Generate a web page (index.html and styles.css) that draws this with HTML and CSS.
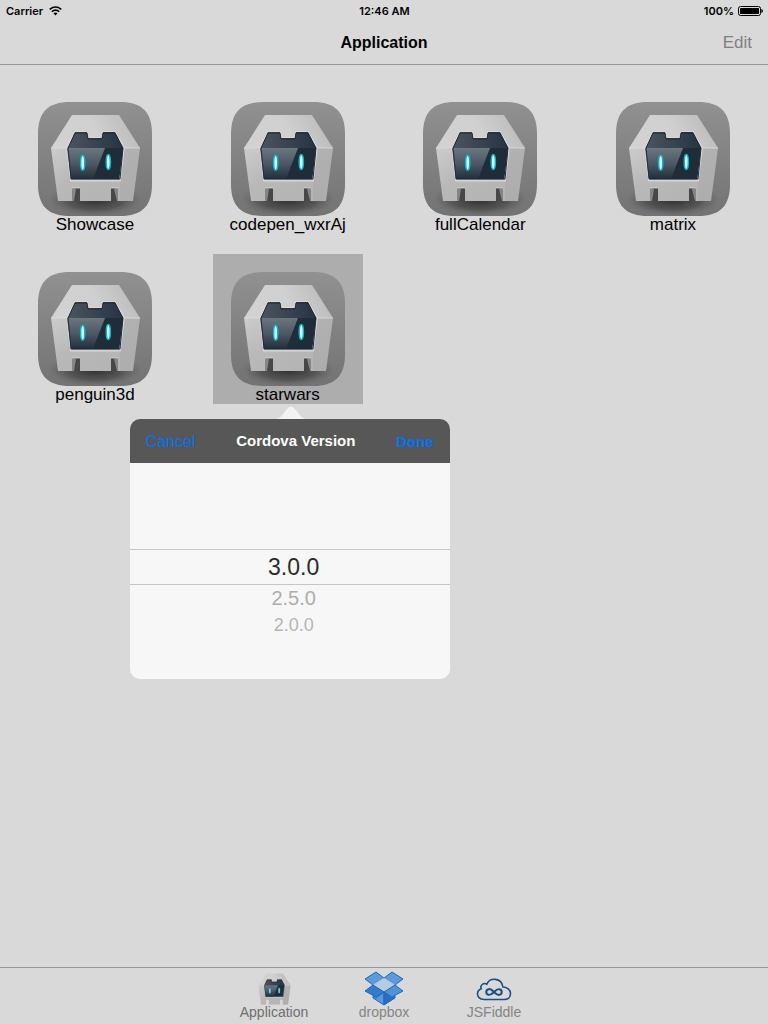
FILE: index.html
```html
<!DOCTYPE html>
<html lang="en">
<head>
<meta charset="utf-8">
<meta name="viewport" content="width=device-width, initial-scale=1">
<title>Application</title>
<link rel="stylesheet" href="styles.css">
</head>
<body>
<svg class="defs" aria-hidden="true">
  <defs>
    <linearGradient id="tile" x1="0" y1="0" x2="0" y2="1"><stop offset="0" stop-color="#919191"/><stop offset="1" stop-color="#737373"/></linearGradient>
    <linearGradient id="roof" x1="0" y1="0.6" x2="1" y2="0.4"><stop offset="0" stop-color="#d2d2d2"/><stop offset="0.5" stop-color="#d0d0d0"/><stop offset="1" stop-color="#bababa"/></linearGradient>
    <linearGradient id="front" x1="0" y1="0" x2="1" y2="1"><stop offset="0" stop-color="#cccccc"/><stop offset="0.4" stop-color="#b9b9b9"/><stop offset="1" stop-color="#b2b2b2"/></linearGradient>
    <linearGradient id="glare" x1="0" y1="0" x2="0" y2="1"><stop offset="0" stop-color="#6d767f"/><stop offset="0.5" stop-color="#4c5864"/><stop offset="1" stop-color="#222e3a"/></linearGradient>
    <linearGradient id="visor" x1="0" y1="0" x2="1" y2="0"><stop offset="0" stop-color="#4b545e"/><stop offset="1" stop-color="#263442"/></linearGradient>
    <linearGradient id="leg" x1="0" y1="0" x2="1" y2="0"><stop offset="0" stop-color="#8a8a8a"/><stop offset="0.5" stop-color="#5a5a5a"/><stop offset="1" stop-color="#444"/></linearGradient>
    <radialGradient id="shadow"><stop offset="0" stop-color="#222" stop-opacity="0.85"/><stop offset="0.6" stop-color="#333" stop-opacity="0.5"/><stop offset="1" stop-color="#555" stop-opacity="0"/></radialGradient>
    <symbol id="robot" viewBox="12 12 91 88">
      <path fill="url(#roof)" d="M34 13H81L102 46H86L77 30H65L64 36H50L49 30H37L29 46H13Z"/>
      <path fill="url(#front)" d="M13 46H29L33 78H82L86 46H102L95 99H80V86H73V99H42V86H34V99H20Z"/>
      <path fill="#8d8d8d" d="M86 46H102L95 99H82V78Z" opacity="0.15"/>
      <path fill="#202d39" stroke="#dadada" stroke-width="1.6" d="M37 30H49L50 36H64L65 30H77L86 46L82 78H33L29 46Z"/>
      <path fill="url(#visor)" d="M37 30H49L50 36H64L65 30H77L85 46H30Z"/>
      <path fill="url(#glare)" d="M29 46H67L55 77H33Z"/>
      <path fill="none" stroke="#202b36" stroke-width="1" d="M30 46L37 31H49L50 37H64L65 31H77L85 46L82 77H33L30 46"/>
      <path fill="none" stroke="#dcdcdc" stroke-width="0.8" d="M32 79H83M34 86H42M73 86H80M13 46H29M86 46H102"/>
      <g stroke="#08b6cc" stroke-width="1.5" fill="#d5f3f3"><ellipse cx="44.7" cy="60.7" rx="2.1" ry="7.5"/><ellipse cx="70.3" cy="60" rx="2.1" ry="7.5"/></g>
    </symbol>
    <symbol id="app" viewBox="0 0 114 114">
      <clipPath id="tileclip"><path d="M32 0H82C104 0 114 10 114 32V82C114 104 104 114 82 114H32C10 114 0 104 0 82V32C0 10 10 0 32 0Z"/></clipPath>
      <g clip-path="url(#tileclip)">
        <rect width="114" height="114" fill="url(#tile)"/>
        <ellipse cx="57" cy="98" rx="47" ry="16" fill="url(#shadow)"/>
        <path fill="#474747" d="M34 86H42V99H34ZM73 86H80V99H73Z"/>
        <path fill="#858585" d="M38 87L36 99H34V86ZM76 87L79 99H80V86Z"/>
        <use href="#robot" x="12" y="12" width="91" height="88"/>
      </g>
    </symbol>
  </defs>
</svg>
<div class="screen">
  <div class="status">
    <span class="status-left">Carrier
      <svg width="13" height="10" viewBox="0 0 13 10" fill="none" stroke="#000" stroke-width="1.6" aria-label="Wi-Fi"><path d="M0.7 3.3Q6.5 -1.3 12.3 3.3M2.8 5.6Q6.5 2.6 10.2 5.6"/><path d="M4.5 7.3Q6.5 5.8 8.5 7.3L6.5 9.5Z" fill="#000" stroke="none"/></svg>
    </span>
    <span>12:46 AM</span>
    <span class="status-right">100%
      <svg width="25" height="10" viewBox="0 0 25 10" aria-label="Battery"><rect x="0.5" y="0.5" width="22" height="9" rx="2" fill="none" stroke="#000"/><rect x="2" y="2" width="19" height="6" rx="0.5"/><path d="M23.3 3Q25 3.5 25 5T23.3 7Z"/></svg>
    </span>
  </div>
  <header class="navbar">
    <h1 class="title">Application</h1>
    <button class="edit" type="button">Edit</button>
  </header>
  <main class="apps">
    <div class="cell"><button class="app" type="button"><svg class="icon"><use href="#app"/></svg><span>Showcase</span></button></div>
    <div class="cell"><button class="app" type="button"><svg class="icon"><use href="#app"/></svg><span>codepen_wxrAj</span></button></div>
    <div class="cell"><button class="app" type="button"><svg class="icon"><use href="#app"/></svg><span>fullCalendar</span></button></div>
    <div class="cell"><button class="app" type="button"><svg class="icon"><use href="#app"/></svg><span>matrix</span></button></div>
    <div class="cell"><button class="app" type="button"><svg class="icon"><use href="#app"/></svg><span>penguin3d</span></button></div>
    <div class="cell">
      <button class="app selected" type="button"><svg class="icon"><use href="#app"/></svg><span>starwars</span></button>
      <section class="popover" role="dialog" aria-labelledby="pop-title">
        <svg class="arrow" width="30" height="13" viewBox="0 0 30 13"><path fill="#f3f3f3" d="M0 13C5 12 7 8 10 4Q15 -3 20 4C23 8 25 12 30 13Z"/></svg>
        <div class="pop-bar">
          <button class="pop-button" type="button">Cancel</button>
          <h2 class="pop-title" id="pop-title">Cordova Version</h2>
          <button class="pop-button done" type="button">Done</button>
        </div>
        <ul class="picker" role="listbox" aria-labelledby="pop-title">
          <li class="option current" role="option" aria-selected="true">3.0.0</li>
          <li class="option near" role="option" aria-selected="false">2.5.0</li>
          <li class="option far" role="option" aria-selected="false">2.0.0</li>
        </ul>
      </section>
    </div>
  </main>
  <nav class="tabs">
    <a class="tab active" href="#application"><svg class="tab-icon" viewBox="0 0 40 34"><use href="#robot" x="4" y="2" width="33" height="32"/></svg>Application</a>
    <a class="tab" href="#dropbox">
      <svg class="tab-icon" viewBox="0 0 40 34" stroke="#1b68c1" stroke-width="1" stroke-linejoin="round">
        <path fill="#5d9ada" d="M12 1L20 7L9 14L1 8ZM28 1L20 7L31 14L39 8Z"/>
        <path fill="#b7cbe1" stroke="#a2bfdf" d="M20 7L31 14L20 21L9 14Z"/>
        <path fill="#347ccb" d="M9 14L20 21L12 26L1 20Z"/><path fill="#5392d5" d="M31 14L39 20L28 26L20 21Z"/>
        <path fill="#5a98d8" d="M9 25L12 27L20 21V34L9 27Z"/><path fill="#266fc4" d="M31 25L28 27L20 21V34L31 27Z"/>
      </svg>dropbox</a>
    <a class="tab" href="#jsfiddle">
      <svg class="tab-icon" viewBox="0 0 40 34" fill="none" stroke="#1b4f86" stroke-width="1.6">
        <path d="M10 28.5C5.500 28.5 3.500 25.500 3.500 23C3.500 20.500 5 18.500 7.200 17.700C5.800 14.500 9.500 11.200 12.800 13.200C16 6 27.500 6.500 29 16C33 16 36.500 19 36.500 22.500C36.500 26 34 28.500 30.500 28.500Z"/>
        <path stroke-width="2" d="M20 21C17.500 18.300 16 17.800 14.500 18.200C11.500 19 11.500 23 14.500 23.800C16.500 24.300 18 23 20 21S23.500 17.700 25.500 18.200C28.500 19 28.500 23 25.500 23.800C24 24.200 22.500 23.500 20 21Z"/>
      </svg>JSFiddle</a>
  </nav>
</div>
</body>
</html>
```
FILE: styles.css
```css
* { box-sizing: border-box; }
body {
  margin: 0;
  background: #d9d9d9;
  color: #000;
  font-family: "Liberation Sans", Arial, sans-serif;
}
button {
  border: 0;
  padding: 0;
  background: none;
  color: inherit;
  font: inherit;
  cursor: pointer;
}
h1, h2, ul { margin: 0; padding: 0; }
.defs { position: absolute; width: 0; height: 0; }
.screen {
  display: flex;
  flex-direction: column;
  min-height: 100vh;
}
.status {
  display: grid;
  grid-template-columns: 1fr auto 1fr;
  align-items: center;
  height: 20px;
  padding: 2px 5px 0 6px;
  font-family: Inter, "Liberation Sans", sans-serif;
  font-size: 11px;
  font-weight: 600;
  line-height: 18px;
}
.status-left, .status-right { display: flex; align-items: center; gap: 6px; }
.status-right { justify-content: flex-end; gap: 4px; }
.status svg { margin-bottom: 1px; }
.navbar {
  display: grid;
  grid-template-columns: 1fr auto 1fr;
  align-items: center;
  height: 45px;
  padding: 2px 16px 0;
  border-bottom: 1px solid #969696;
}
.title { grid-column: 2; font-size: 16px; line-height: 20px; }
.edit {
  justify-self: end;
  color: #808080;
  font-size: 17px;
  line-height: 20px;
}
.apps {
  flex: 1;
  display: grid;
  grid-template-columns: repeat(4, 150px);
  grid-auto-rows: 150px;
  align-content: start;
  justify-content: space-between;
  row-gap: 20px;
  padding: 19px 20px;
}
.cell { position: relative; }
.app {
  display: flex;
  flex-direction: column;
  align-items: center;
  width: 100%;
  height: 100%;
  padding-top: 18px;
  font-size: 17px;
  line-height: 18px;
}
.selected { background: #adadad; }
.icon { width: 114px; height: 114px; }
.popover {
  position: absolute;
  top: 165px;
  left: -83px;
  width: 320px;
  border-radius: 10px;
  background: #f7f7f7;
}
.arrow { position: absolute; top: -13px; left: 146px; }
.pop-bar {
  display: flex;
  align-items: center;
  justify-content: space-between;
  height: 44px;
  padding: 0 16px;
  border-radius: 10px 10px 0 0;
  background: #575757;
}
.pop-title { color: #fff; font-size: 15px; line-height: 20px; }
.pop-button {
  padding-top: 2px;
  color: #0073f5;
  font-size: 16px;
  line-height: 20px;
}
.done { font-size: 15px; font-weight: bold; }
.picker {
  height: 216px;
  padding-top: 86px;
  list-style: none;
  text-align: center;
}
.option { padding-left: 8px; color: #adadad; line-height: 27px; }
.current {
  border: solid #c6c6c6;
  border-width: 1px 0;
  color: #2b2b2b;
  font-size: 23px;
  line-height: 34px;
}
.near { font-size: 20px; }
.far { font-size: 18px; color: #b5b5b5; }
.tabs {
  display: flex;
  justify-content: center;
  gap: 34px;
  height: 57px;
  padding-top: 3px;
  border-top: 1px solid #969696;
}
.tab {
  display: flex;
  flex-direction: column;
  align-items: center;
  width: 76px;
  color: #858585;
  font-size: 14px;
  line-height: 14px;
  text-decoration: none;
}
.active { color: #6f6f6f; }
.tab-icon { width: 40px; height: 34px; overflow: visible; }
```
